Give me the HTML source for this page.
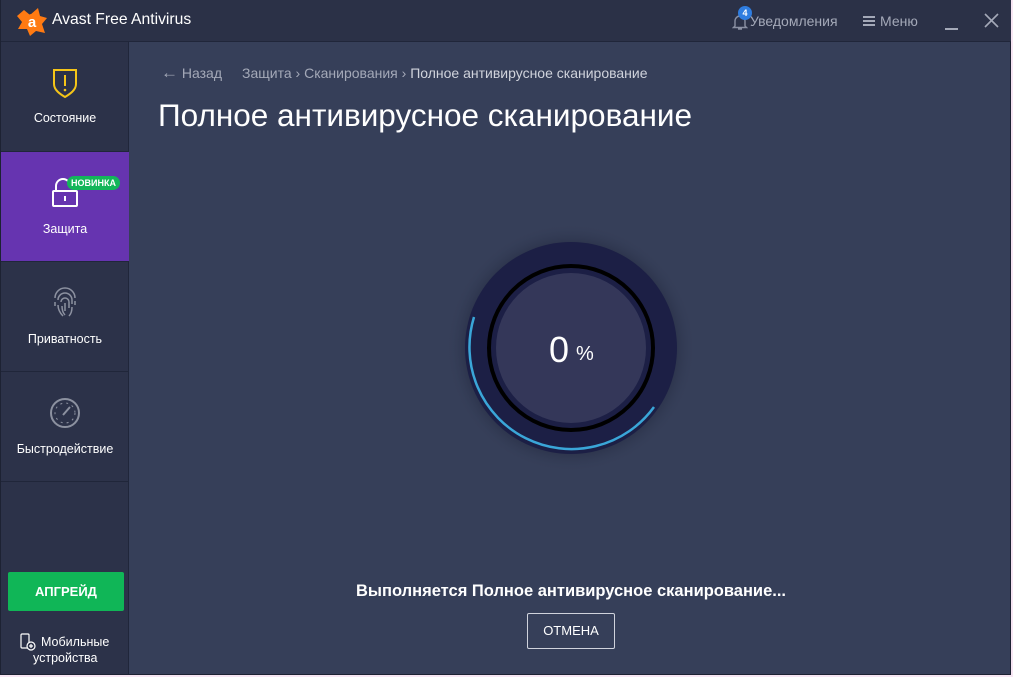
<!DOCTYPE html>
<html><head><meta charset="utf-8"><style>
*{margin:0;padding:0;box-sizing:border-box}
body{width:1013px;height:677px;background:#f7e6f3;font-family:"Liberation Sans","Noto Sans CJK SC",sans-serif;position:relative;overflow:hidden}
#win{position:absolute;left:0;top:0;width:1011px;height:675px;background:#363f59;border:1px solid #1d2233;border-top:none}
#top{position:absolute;left:0;top:0;width:1010px;height:42px;background:#2b3147;border-bottom:1px solid #20263a}
#side{position:absolute;left:0;top:42px;width:128px;height:632px;background:#2c3249;border-right:1px solid #20263a}
.it{position:absolute;left:0;width:128px;height:110px;border-bottom:1px solid #20263a;color:#fff;font-size:12.5px;text-align:center}
.it .lb{position:absolute;left:0;right:0;top:70px}
.it svg{position:absolute;left:48px;top:24px}
</style></head><body>
<div id="win">
<div id="top">
 <svg style="position:absolute;left:15px;top:7px" width="32" height="30" viewBox="0 0 32 30"><path d="M8 3 L14 8 L22 1 L24 9 L31 11 L26 17 L29 26 L20 24 L14 29 L11 22 L2 22 L6 15 L1 9 Z" fill="#ff7a12"/><circle cx="16" cy="15" r="8" fill="#ff7a12"/><text x="16" y="20" font-size="15" font-family="Liberation Sans" fill="#fff" text-anchor="middle" font-weight="bold">a</text></svg>
 <div style="position:absolute;left:51px;top:11px;color:#fff;font-size:15.7px">Avast Free Antivirus</div>
 <svg style="position:absolute;left:731px;top:13px" width="16" height="18" viewBox="0 0 16 18"><path d="M3 13 V8 a5 5 0 0 1 10 0 V13 L14.5 14.5 H1.5 Z M6 16 h4" fill="none" stroke="#8a90a3" stroke-width="1.4"/></svg>
 <div style="position:absolute;left:737px;top:6px;width:14px;height:14px;border-radius:7px;background:#2f7de0;color:#fff;font-size:9px;font-weight:bold;text-align:center;line-height:14px">4</div>
 <div style="position:absolute;left:749px;top:13px;color:#a4a9b8;font-size:14px">Уведомления</div>
 <div style="position:absolute;left:862px;top:16px;width:12px;height:2px;background:#a4a9b8;box-shadow:0 4px 0 #a4a9b8,0 8px 0 #a4a9b8"></div>
 <div style="position:absolute;left:879px;top:13px;color:#a4a9b8;font-size:14px">Меню</div>
 <div style="position:absolute;left:944px;top:28px;width:13px;height:2px;background:#a4a9b8"></div>
 <svg style="position:absolute;left:983px;top:13px" width="15" height="15"><path d="M1 1L14 14M14 1L1 14" stroke="#a4a9b8" stroke-width="1.6"/></svg>
</div>
<div id="side">
 <div class="it" style="top:0"><svg width="32" height="34" viewBox="0 0 32 34"><path d="M4 4 H26 V18 C26 24 20 28 15 31 C10 28 4 24 4 18 Z" fill="none" stroke="#f5c518" stroke-width="2" transform="translate(1,0)"/><path d="M16 9 V20" stroke="#f5c518" stroke-width="2"/><circle cx="16" cy="24" r="1.3" fill="#f5c518"/></svg><div class="lb" style="top:69px">Состояние</div></div>
 <div class="it" style="top:110px;background:#6634b0"><svg width="32" height="34" viewBox="0 0 32 34"><path d="M7 15 V10 a7 7 0 0 1 14 0" fill="none" stroke="#fff" stroke-width="2"/><rect x="4" y="15" width="24" height="15" rx="1" fill="none" stroke="#fff" stroke-width="2"/><path d="M16 20 v5" stroke="#fff" stroke-width="2"/></svg>
  <div style="position:absolute;left:66px;top:24px;background:#13b65a;color:#fff;font-size:9px;font-weight:bold;border-radius:7px;padding:0 4px;height:14px;line-height:14px">НОВИНКА</div><div class="lb">Защита</div></div>
 <div class="it" style="top:220px"><svg width="32" height="34" viewBox="0 0 32 34" fill="none" stroke="#8c91a0" stroke-width="1.5"><path d="M6 12 a10 10 0 0 1 20 0 M9 14 a7 7 0 0 1 14 0 v4 M12 16 a4 4 0 0 1 8 0 v6 M16 17 v8 M6 16 v4 M26 15 v4 M9 19 c0 5 2 8 5 11 M23 21 c0 4 -1 7 -3 9 M13 20 c0 4 1 7 3 9"/></svg><div class="lb">Приватность</div></div>
 <div class="it" style="top:330px"><svg width="34" height="34" viewBox="0 0 34 34"><circle cx="16" cy="17" r="14" fill="none" stroke="#8c91a0" stroke-width="2"/><circle cx="16" cy="17" r="10" fill="none" stroke="#8c91a0" stroke-width="1" stroke-dasharray="2 4"/><path d="M14 19 L21 11" stroke="#8c91a0" stroke-width="2"/></svg><div class="lb">Быстродействие</div></div>
 <div style="position:absolute;left:7px;top:530px;width:116px;height:39px;background:#10b657;border-radius:2px;color:#fff;font-size:13px;font-weight:bold;text-align:center;line-height:39px">АПГРЕЙД</div>
 <svg style="position:absolute;left:19px;top:591px" width="16" height="18" viewBox="0 0 16 18" fill="none" stroke="#fff" stroke-width="1.2"><rect x="1" y="1" width="8" height="14" rx="1"/><circle cx="11" cy="13" r="4" fill="#2c3249"/><path d="M11 11v4M9 13h4"/></svg>
 <div style="position:absolute;left:40px;top:592px;color:#fff;font-size:12.5px;line-height:16px">Мобильные</div>
 <div style="position:absolute;left:32px;top:608px;color:#fff;font-size:12.5px;line-height:16px">устройства</div>
</div>
<div style="position:absolute;left:160px;top:63px;color:#a4a9b8;font-size:14px"><span style="font-size:17px;font-weight:bold;color:#a4a9b8">&#8592;</span> Назад<span style="margin-left:20px">Защита › Сканирования › </span><span style="color:#d0d3dc">Полное антивирусное сканирование</span></div>
<div style="position:absolute;left:157px;top:97px;color:#fff;font-size:31.5px">Полное антивирусное сканирование</div>
<svg style="position:absolute;left:440px;top:218px" width="260" height="260" viewBox="0 0 260 260">
 <defs><radialGradient id="g"><stop offset="0.78" stop-color="#1a1f33" stop-opacity="0.6"/><stop offset="1" stop-color="#363f59" stop-opacity="0"/></radialGradient></defs>
 <circle cx="130" cy="130" r="125" fill="url(#g)"/>
 <circle cx="130" cy="130" r="106" fill="#1c1f45"/>
 <path d="M33 99 A102 102 0 0 0 213 189" fill="none" stroke="#3aa6d8" stroke-width="2.5"/>
 <circle cx="130" cy="130" r="82" fill="none" stroke="#000" stroke-width="4"/>
 <circle cx="130" cy="130" r="75" fill="#343759"/>
 <text x="118" y="144" fill="#fff" font-size="36" font-family="Liberation Sans" text-anchor="middle">0</text>
 <text x="135" y="142" fill="#fff" font-size="20" font-family="Liberation Sans">%</text>
</svg>
<div style="position:absolute;left:0;width:1140px;top:582px;text-align:center;color:#fff;font-size:16.5px;font-weight:bold">Выполняется Полное антивирусное сканирование...</div>
<div style="position:absolute;left:526px;top:613px;width:88px;height:36px;border:1px solid #d0d3dc;border-radius:2px;color:#fff;font-size:13px;text-align:center;line-height:34px">ОТМЕНА</div>
</div>
</body></html>
